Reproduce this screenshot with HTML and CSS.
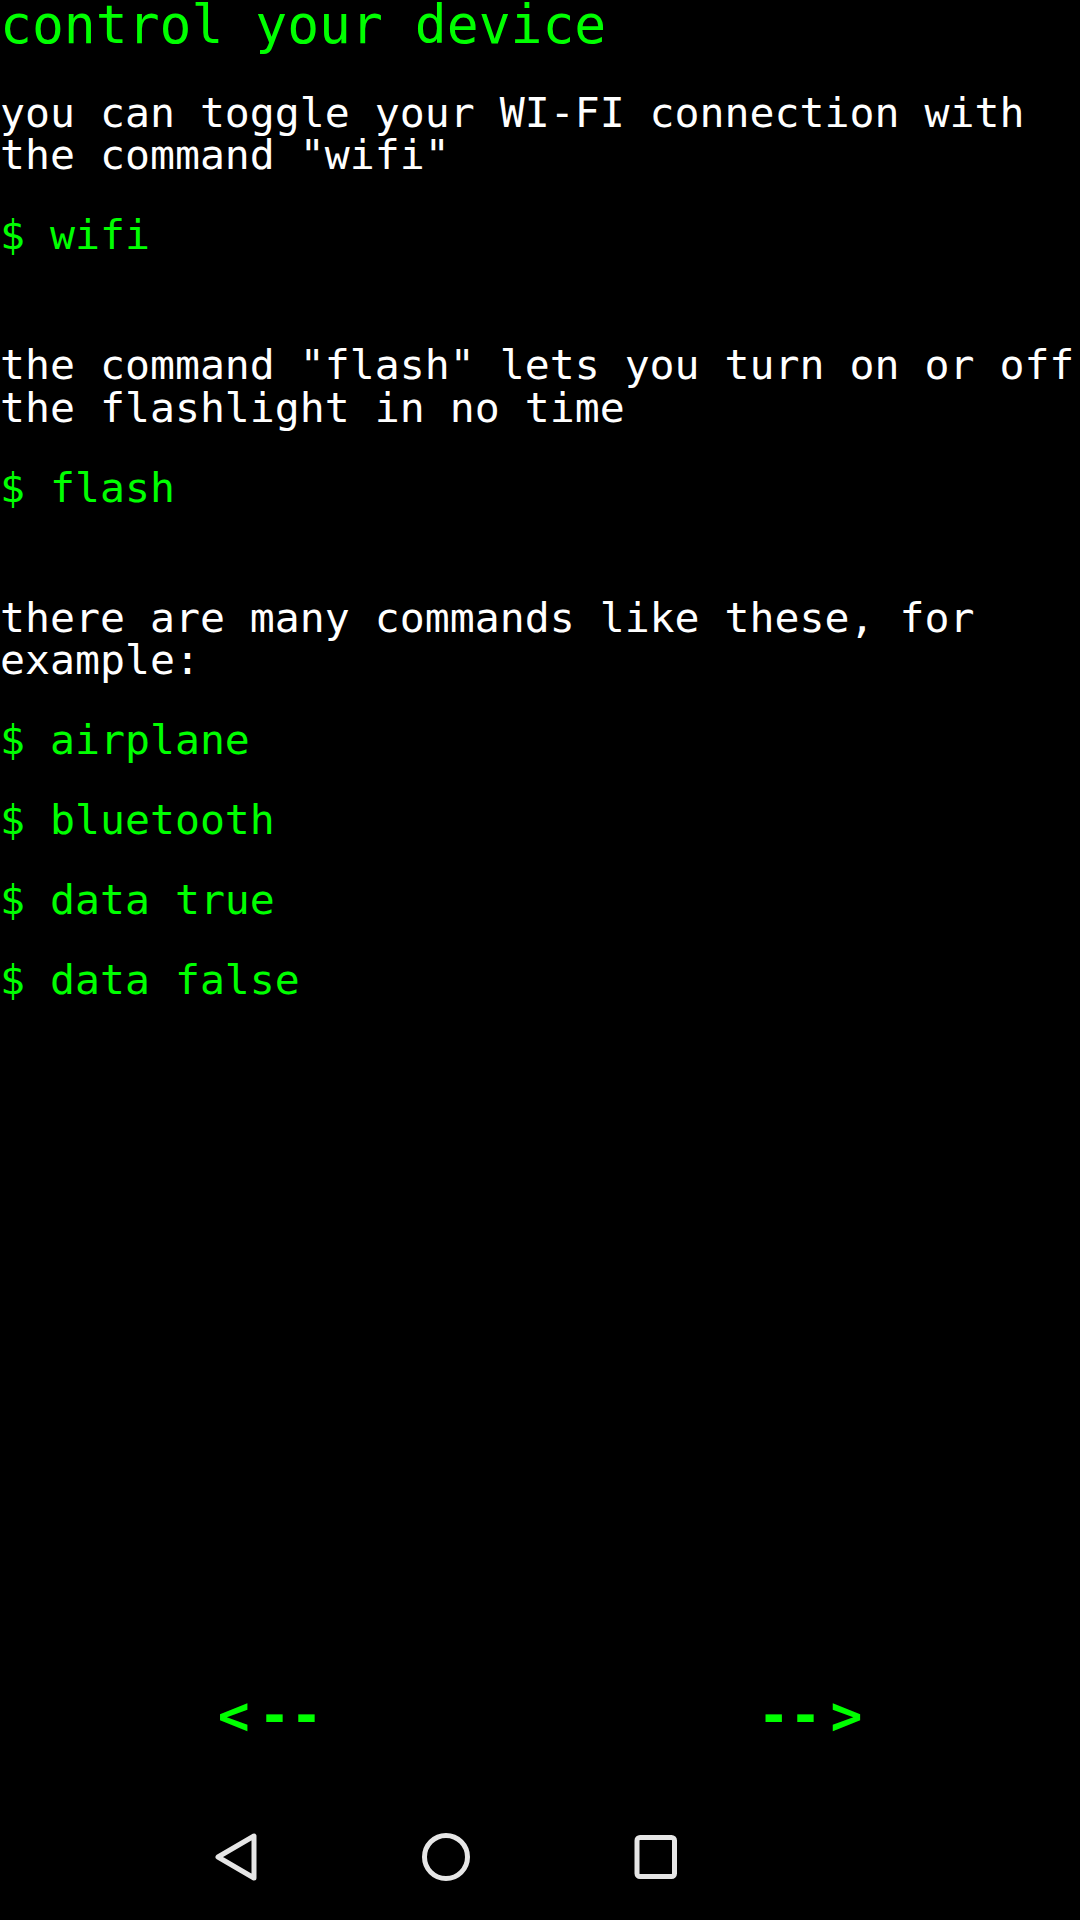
FILE: index.html
```html
<!DOCTYPE html>
<html>
<head>
<meta charset="utf-8">
<link rel="stylesheet" href="styles.css">
</head>
<body>
<div class="screen">
  <main class="content">
    <h1 class="title">control your device</h1>
    <section class="section first">
      <p class="para">you can toggle your WI-FI connection with the command "wifi"</p>
      <p class="cmd">$ wifi</p>
    </section>
    <section class="section">
      <p class="para">the command "flash" lets you turn on or off the flashlight in no time</p>
      <p class="cmd">$ flash</p>
    </section>
    <section class="section">
      <p class="para">there are many commands like these, for example:</p>
      <p class="cmd">$ airplane</p>
      <p class="cmd">$ bluetooth</p>
      <p class="cmd">$ data true</p>
      <p class="cmd">$ data false</p>
    </section>
  </main>
  <div class="arrows">
    <div class="arrow"><span class="chev-l">&lt;</span>--</div>
    <div class="arrow">--<span class="chev-r">&gt;</span></div>
  </div>
  <nav class="navbar">
    <svg class="nav-icon" viewBox="0 0 60 60" width="60" height="60"><path d="M12 30 L48 9 L48 51 Z" fill="none" stroke="#e6e6e6" stroke-width="5" stroke-linejoin="round"/></svg>
    <svg class="nav-icon" viewBox="0 0 60 60" width="60" height="60"><circle cx="30" cy="30" r="21.5" fill="none" stroke="#e6e6e6" stroke-width="5"/></svg>
    <svg class="nav-icon" viewBox="0 0 60 60" width="60" height="60"><rect x="11" y="10.5" width="37.5" height="39" rx="3" fill="none" stroke="#e6e6e6" stroke-width="5"/></svg>
  </nav>
</div>
</body>
</html>
```
FILE: styles.css
```css
html, body {
  margin: 0;
  padding: 0;
  background: #000;
}
.screen {
  width: 1080px;
  height: 1920px;
  display: flex;
  flex-direction: column;
  overflow: hidden;
  background: #000;
  font-family: "DejaVu Sans Mono", "Liberation Mono", monospace;
}
.content {
  flex: 1;
  display: flex;
  flex-direction: column;
  gap: 87.5px;
}
.title {
  margin: 0;
  font-size: 53px;
  line-height: 49px;
  font-weight: normal;
  color: #00ff00;
  white-space: nowrap;
}
.section {
  display: flex;
  flex-direction: column;
  gap: 37.5px;
}
.section.first {
  margin-top: -45px;
}
.para, .cmd {
  margin: 0;
  font-size: 41.5px;
  line-height: 42.5px;
}
.para {
  color: #ffffff;
}
.cmd {
  color: #00ff00;
}
.arrows {
  height: 158px;
  display: flex;
  align-items: center;
}
.arrow {
  flex: 1;
  text-align: center;
  color: #00ff00;
  font-weight: bold;
  font-size: 53px;
  line-height: 53px;
}
.chev-l {
  margin-right: 9px;
}
.chev-r {
  margin-left: 9px;
}
.navbar {
  height: 126px;
  display: flex;
  align-items: center;
  justify-content: center;
  gap: 150px;
  padding-right: 188px;
}
.nav-icon {
  display: block;
}
```
